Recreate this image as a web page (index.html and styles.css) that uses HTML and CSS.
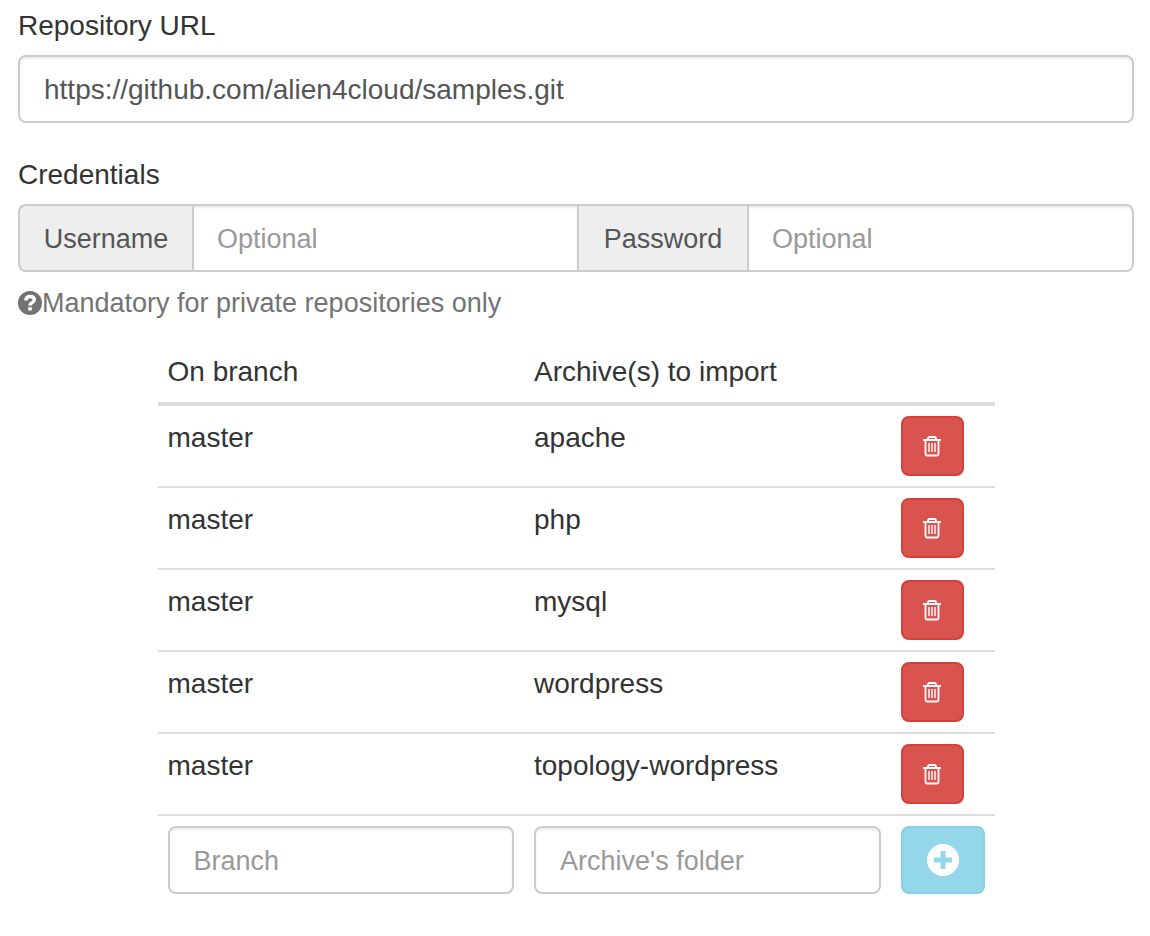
FILE: index.html
```html
<!DOCTYPE html>
<html lang="en">
<head>
<meta charset="utf-8">
<meta name="viewport" content="width=device-width, initial-scale=1">
<title>Git repository</title>
<link rel="stylesheet" href="styles.css">
</head>
<body>
<svg class="sprite" aria-hidden="true">
  <symbol id="trash" viewBox="0 0 20 22">
    <path d="M1 5H19M6 5V3.500Q6 2 7.500 2H12.500Q14 2 14 3.500V5M3.500 5V19Q3.500 20.500 5 20.500H15Q16.500 20.500 16.500 19V5" fill="none" stroke="currentColor" stroke-width="1.800"/>
    <path d="M7 8V17M10 8V17M13 8V17" stroke="currentColor" stroke-width="1.400"/>
  </symbol>
</svg>
<form class="repository">
  <label class="title" for="url">Repository URL</label>
  <input class="control url" id="url" type="text" value="https://github.com/alien4cloud/samples.git">
  <h2 class="title">Credentials</h2>
  <div class="group">
    <label class="addon" for="user">Username</label>
    <input class="control" id="user" type="text" placeholder="Optional">
    <label class="addon inner" for="pass">Password</label>
    <input class="control" id="pass" type="password" placeholder="Optional">
  </div>
  <p class="help">
    <svg class="help-icon" viewBox="0 0 24 24" aria-hidden="true"><circle cx="12" cy="12" r="12" fill="currentColor"/><path d="M7.800 9.500Q8.200 5.500 12 5.500Q16.300 5.500 16.300 8.800Q16.300 10.500 14 11.800Q12 12.800 12 14.500" fill="none" stroke="#fff" stroke-width="3.400"/><path d="M10.200 16.200h3.600v3.400h-3.600z" fill="#fff"/></svg>Mandatory for private repositories only
  </p>
  <table class="archives">
    <thead><tr><th class="branch">On branch</th><th class="archive">Archive(s) to import</th><th class="action"></th></tr></thead>
    <tbody>
      <tr><td>master</td><td>apache</td><td><button class="button remove" type="button" aria-label="Remove apache"><svg class="trash"><use href="#trash"/></svg></button></td></tr>
      <tr><td>master</td><td>php</td><td><button class="button remove" type="button" aria-label="Remove php"><svg class="trash"><use href="#trash"/></svg></button></td></tr>
      <tr><td>master</td><td>mysql</td><td><button class="button remove" type="button" aria-label="Remove mysql"><svg class="trash"><use href="#trash"/></svg></button></td></tr>
      <tr><td>master</td><td>wordpress</td><td><button class="button remove" type="button" aria-label="Remove wordpress"><svg class="trash"><use href="#trash"/></svg></button></td></tr>
      <tr><td>master</td><td>topology-wordpress</td><td><button class="button remove" type="button" aria-label="Remove topology-wordpress"><svg class="trash"><use href="#trash"/></svg></button></td></tr>
      <tr><td><input class="control" type="text" placeholder="Branch" aria-label="Branch"></td><td><input class="control" type="text" placeholder="Archive's folder" aria-label="Archive's folder"></td><td><button class="button add" type="button" aria-label="Add" disabled><svg class="plus" viewBox="0 0 32 32"><circle cx="16" cy="16" r="16" fill="#fff"/><path d="M16 7v18M7 16h18" stroke="#94d7eb" stroke-width="5" stroke-linejoin="round"/></svg></button></td></tr>
    </tbody>
  </table>
</form>
</body>
</html>
```
FILE: styles.css
```css
* { box-sizing: border-box; }
body {
  margin: 0;
  background: #fff;
  color: #333;
  font: 28px/40px "Liberation Sans", Arial, sans-serif;
}
.sprite { position: absolute; width: 0; height: 0; }
.repository { padding: 6px 16px 40px 18px; }
.title { display: block; margin: 0 0 9px; font-size: 28px; font-weight: 400; }
.control {
  display: block;
  width: 100%;
  min-width: 0;
  height: 68px;
  padding: 14px 24px 12px;
  border: 2px solid #ccc;
  border-radius: 8px;
  background: #fff;
  box-shadow: inset 0 2px 2px rgba(0, 0, 0, .075);
  color: #555;
  font: inherit;
}
.control::placeholder { color: #999; font-size: 27px; opacity: 1; }
.url { margin-bottom: 32px; }
.group { display: flex; }
.group .control { flex: 1; padding-right: 24px; border-radius: 0; }
.group .control:last-child { border-radius: 0 8px 8px 0; }
#user, #pass { padding-left: 23px; }
.addon {
  flex: none;
  width: 174px;
  padding: 13px 0 11px;
  border: 2px solid #ccc;
  border-right: 0;
  border-radius: 8px 0 0 8px;
  background: #eee;
  color: #555;
  font-size: 27px;
  text-align: center;
}
.inner { width: 168px; border-left: 0; border-radius: 0; }
.help { display: flex; align-items: center; margin: 11px 0 27px; color: #737373; font-size: 27px; }
.help-icon { width: 24px; height: 24px; }
.archives { width: 75%; margin: 0 auto; border-collapse: collapse; table-layout: fixed; }
.archives th { height: 54px; padding: 2px 10px 10px; border-bottom: 4px solid #ddd; font-weight: 400; text-align: left; }
.archives td { padding: 10px; border-top: 2px solid #ddd; line-height: 44px; vertical-align: top; }
.action { width: 104px; }
.button { display: flex; align-items: center; justify-content: center; padding: 0; border: 2px solid; border-radius: 8px; }
.remove { width: 63px; height: 60px; border-color: #d43f3a; background: #d9534f; color: #fff; }
.add { width: 84px; height: 68px; border-color: #86d2e8; background: #94d7eb; }
.trash { width: 20px; height: 22px; }
.plus { width: 32px; height: 32px; }
```
